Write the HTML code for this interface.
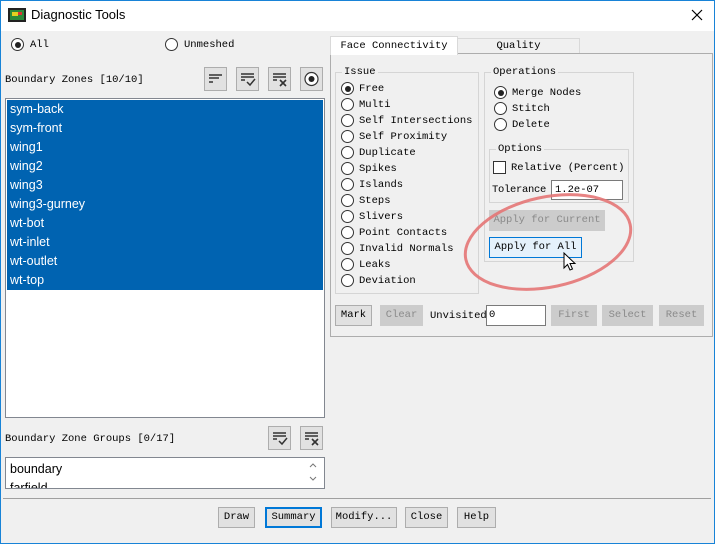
<!DOCTYPE html>
<html><head><meta charset="utf-8"><style>
*{box-sizing:border-box;margin:0;padding:0}
body{width:715px;height:544px;background:#f0f0f0;position:relative;overflow:hidden;font-family:"Liberation Mono","Noto Serif CJK SC",monospace;font-size:10.5px;color:#000}
.a{position:absolute;white-space:nowrap}
.t{position:absolute;white-space:nowrap;margin-top:1px}
.win{position:absolute;left:0;top:0;width:715px;height:544px;border:1px solid #1883d7}
.title{position:absolute;left:1px;top:1px;width:713px;height:30px;background:#fff}
.rad{position:absolute;width:13px;height:13px;border:1px solid #333;border-radius:50%;background:#fff}
.rad.on::after{content:"";position:absolute;left:2.5px;top:2.5px;width:6px;height:6px;border-radius:50%;background:#222}
.btn{position:absolute;background:#e1e1e1;border:1px solid #adadad;text-align:center;line-height:19px;height:21px}
.dis{background:#ccc;border-color:#ccc;color:#8a8a8a}
.grp{position:absolute;border:1px solid #d5d5d5}
.lbl{position:absolute;background:#f0f0f0;padding:0 2px;line-height:12px}
.ib{position:absolute;width:23px;height:24px;background:#e1e1e1;border:1px solid #adadad}
.li{position:absolute;left:10px;color:#fff;font-family:"Liberation Sans",sans-serif;font-size:12.5px;line-height:19px}
</style></head><body>
<div class="win"></div>
<div class="title"></div>
<svg class="a" style="left:8px;top:7px" width="18" height="16"><rect x="0" y="1" width="18" height="14" fill="#222"/><rect x="2" y="3" width="14" height="10" fill="#2c8a3a"/><rect x="4" y="5" width="6" height="4" fill="#e5d020"/><rect x="10" y="5" width="4" height="3" fill="#d33"/></svg>
<div class="a" style="left:31px;top:7px;font-family:'Liberation Sans',sans-serif;font-size:13px">Diagnostic Tools</div>
<svg class="a" style="left:691px;top:9px" width="12" height="12"><path d="M1 1L11 11M11 1L1 11" stroke="#000" stroke-width="1.2"/></svg>

<div class="rad on" style="left:11px;top:38px"></div><div class="t" style="left:30px;top:38px">All</div>
<div class="rad" style="left:165px;top:38px"></div><div class="t" style="left:184px;top:38px">Unmeshed</div>
<div class="t" style="left:5px;top:73px">Boundary Zones [10/10]</div>
<div class="ib" style="left:204px;top:67px"></div><svg class="a" style="left:204px;top:67px" width="23" height="24"><path d="M5 8H18M5 11H15M5 15H9" stroke="#333" stroke-width="1.4"/></svg>
<div class="ib" style="left:236px;top:67px"></div><svg class="a" style="left:236px;top:67px" width="23" height="24"><path d="M5 7H18M5 10H18M5 13H9M11 15l3 3 5-6" stroke="#333" stroke-width="1.5" fill="none"/></svg>
<div class="ib" style="left:268px;top:67px"></div><svg class="a" style="left:268px;top:67px" width="23" height="24"><path d="M5 7H18M5 10H18M5 13H9M12 13l6 6M18 13l-6 6" stroke="#333" stroke-width="1.6" fill="none"/></svg>
<div class="ib" style="left:300px;top:67px"></div><svg class="a" style="left:300px;top:67px" width="23" height="24"><circle cx="11.5" cy="12" r="6.5" stroke="#333" stroke-width="1.2" fill="#fff"/><circle cx="11.5" cy="12" r="3" fill="#222"/></svg>

<div class="a" style="left:5px;top:98px;width:320px;height:320px;background:#fff;border:1px solid #828790"></div>
<div class="a" style="left:7px;top:100px;width:316px;height:190px;background:#0063b1"></div>
<div class="li" style="top:100px">sym-back</div>
<div class="li" style="top:119px">sym-front</div>
<div class="li" style="top:138px">wing1</div>
<div class="li" style="top:157px">wing2</div>
<div class="li" style="top:176px">wing3</div>
<div class="li" style="top:195px">wing3-gurney</div>
<div class="li" style="top:214px">wt-bot</div>
<div class="li" style="top:233px">wt-inlet</div>
<div class="li" style="top:252px">wt-outlet</div>
<div class="li" style="top:271px">wt-top</div>

<div class="t" style="left:5px;top:432px">Boundary Zone Groups [0/17]</div>
<div class="ib" style="left:268px;top:426px"></div><svg class="a" style="left:268px;top:426px" width="23" height="24"><path d="M5 7H18M5 10H18M5 13H9M11 15l3 3 5-6" stroke="#333" stroke-width="1.5" fill="none"/></svg>
<div class="ib" style="left:300px;top:426px"></div><svg class="a" style="left:300px;top:426px" width="23" height="24"><path d="M5 7H18M5 10H18M5 13H9M12 13l6 6M18 13l-6 6" stroke="#333" stroke-width="1.6" fill="none"/></svg>
<div class="a" style="left:5px;top:457px;width:320px;height:32px;background:#fff;border:1px solid #828790;overflow:hidden"><div style="position:absolute;left:4px;top:2px;font-family:'Liberation Sans',sans-serif;font-size:12.5px;line-height:19px">boundary<br>farfield</div></div>
<svg class="a" style="left:309px;top:462px" width="8" height="22"><path d="M1 5L4 2L7 5M1 15L4 18L7 15" stroke="#777" fill="none"/></svg>
<div class="a" style="left:3px;top:498px;width:708px;height:1px;background:#a0a0a0"></div>

<div class="a" style="left:457px;top:38px;width:123px;height:16px;background:#f0f0f0;border:1px solid #d9d9d9;text-align:center;line-height:14px">Quality</div>
<div class="a" style="left:330px;top:53px;width:383px;height:284px;border:1px solid #adadad;background:#f0f0f0"></div>
<div class="a" style="left:330px;top:36px;width:128px;height:19px;background:#fff;border:1px solid #d9d9d9;border-bottom:none;text-align:center;line-height:18px">Face Connectivity</div>

<div class="grp" style="left:335px;top:72px;width:144px;height:222px"></div><div class="lbl" style="left:342px;top:66px">Issue</div>
<div class="rad on" style="left:341px;top:82px"></div><div class="t" style="left:359px;top:82px">Free</div>
<div class="rad" style="left:341px;top:98px"></div><div class="t" style="left:359px;top:98px">Multi</div>
<div class="rad" style="left:341px;top:114px"></div><div class="t" style="left:359px;top:114px">Self Intersections</div>
<div class="rad" style="left:341px;top:130px"></div><div class="t" style="left:359px;top:130px">Self Proximity</div>
<div class="rad" style="left:341px;top:146px"></div><div class="t" style="left:359px;top:146px">Duplicate</div>
<div class="rad" style="left:341px;top:162px"></div><div class="t" style="left:359px;top:162px">Spikes</div>
<div class="rad" style="left:341px;top:178px"></div><div class="t" style="left:359px;top:178px">Islands</div>
<div class="rad" style="left:341px;top:194px"></div><div class="t" style="left:359px;top:194px">Steps</div>
<div class="rad" style="left:341px;top:210px"></div><div class="t" style="left:359px;top:210px">Slivers</div>
<div class="rad" style="left:341px;top:226px"></div><div class="t" style="left:359px;top:226px">Point Contacts</div>
<div class="rad" style="left:341px;top:242px"></div><div class="t" style="left:359px;top:242px">Invalid Normals</div>
<div class="rad" style="left:341px;top:258px"></div><div class="t" style="left:359px;top:258px">Leaks</div>
<div class="rad" style="left:341px;top:274px"></div><div class="t" style="left:359px;top:274px">Deviation</div>

<div class="grp" style="left:484px;top:72px;width:150px;height:190px"></div><div class="lbl" style="left:491px;top:66px">Operations</div>
<div class="rad on" style="left:494px;top:86px"></div><div class="t" style="left:512px;top:86px">Merge Nodes</div>
<div class="rad" style="left:494px;top:102px"></div><div class="t" style="left:512px;top:102px">Stitch</div>
<div class="rad" style="left:494px;top:118px"></div><div class="t" style="left:512px;top:118px">Delete</div>
<div class="grp" style="left:489px;top:149px;width:140px;height:54px"></div><div class="lbl" style="left:496px;top:143px">Options</div>
<div class="a" style="left:493px;top:161px;width:13px;height:13px;border:1px solid #333;background:#fff"></div><div class="t" style="left:511px;top:161px">Relative (Percent)</div>
<div class="t" style="left:492px;top:183px;letter-spacing:-0.3px">Tolerance</div>
<div class="a" style="left:551px;top:180px;width:72px;height:20px;background:#fff;border:1px solid #7a7a7a;padding-left:3px;line-height:19px">1.2e-07</div>
<div class="btn dis" style="left:489px;top:210px;width:116px">Apply for Current</div>
<div class="btn" style="left:489px;top:237px;width:93px;background:#e5f1fb;border-color:#0078d7">Apply for All</div>

<div class="btn" style="left:335px;top:305px;width:37px">Mark</div>
<div class="btn dis" style="left:380px;top:305px;width:43px">Clear</div>
<div class="t" style="left:430px;top:309px">Unvisited</div>
<div class="a" style="left:486px;top:305px;width:60px;height:21px;background:#fff;border:1px solid #7a7a7a;padding-left:2px;line-height:19px">0</div>
<div class="btn dis" style="left:551px;top:305px;width:46px">First</div>
<div class="btn dis" style="left:602px;top:305px;width:51px">Select</div>
<div class="btn dis" style="left:659px;top:305px;width:45px">Reset</div>

<svg class="a" style="left:455px;top:185px" width="190" height="120"><ellipse cx="93" cy="57" rx="84" ry="45" transform="rotate(-12 93 57)" fill="none" stroke="#e47676" stroke-width="3" opacity="0.9"/></svg>
<svg class="a" style="left:563px;top:252px" width="14" height="20"><path d="M1 1V16L4.5 12.5L7 18L9.5 17L7 11.5H12Z" fill="#fff" stroke="#000" stroke-width="1"/></svg>

<div class="btn" style="left:218px;top:507px;width:37px">Draw</div>
<div class="btn" style="left:265px;top:507px;width:57px;border:2px solid #0078d7;line-height:17px">Summary</div>
<div class="btn" style="left:331px;top:507px;width:66px">Modify...</div>
<div class="btn" style="left:405px;top:507px;width:43px">Close</div>
<div class="btn" style="left:457px;top:507px;width:39px">Help</div>
</body></html>
